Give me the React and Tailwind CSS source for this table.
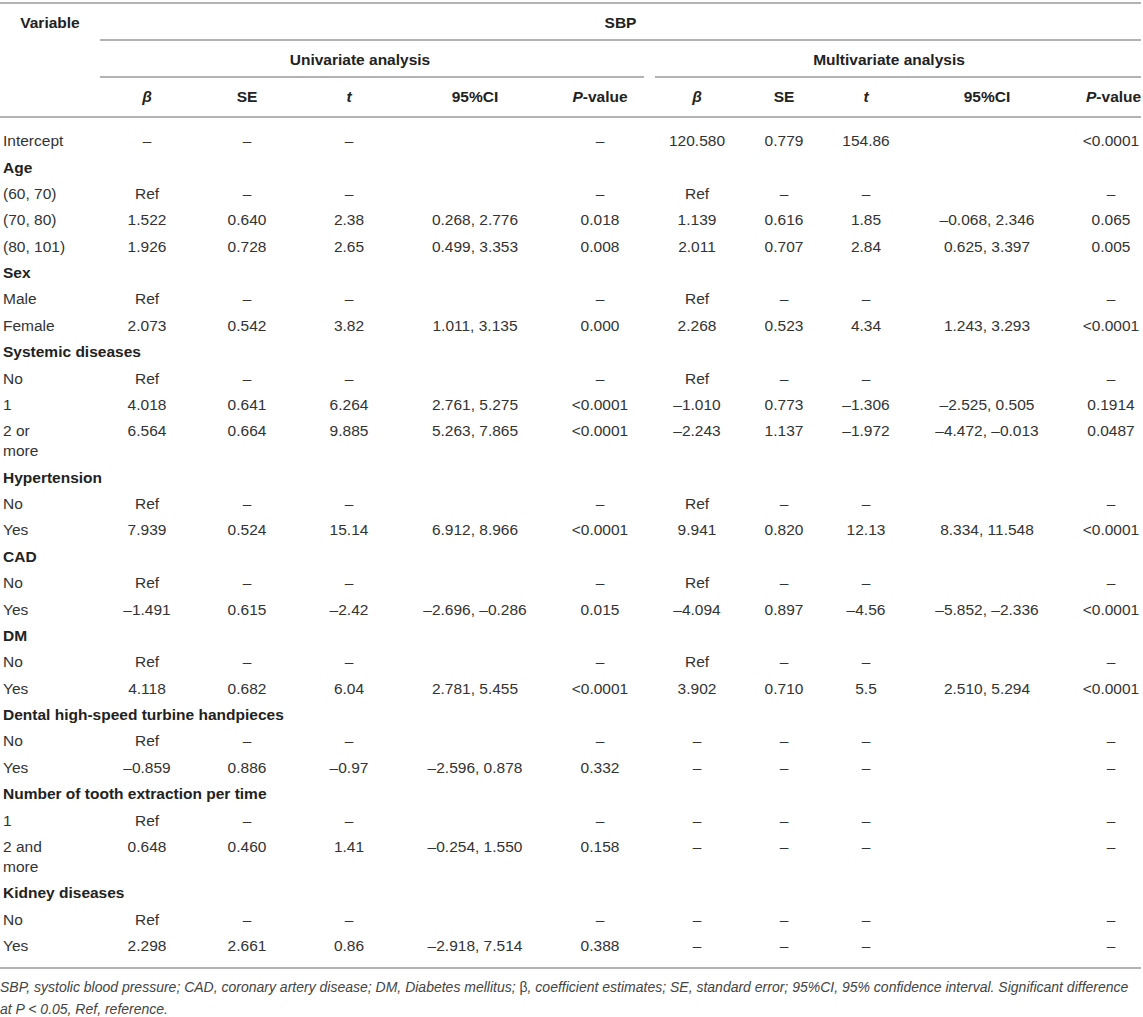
const COLS = 'grid grid-cols-[100px_94px_106px_98px_154px_96px_98px_76px_88px_154px_77px]';

const REF_BOTH = ['Ref', '–', '–', '', '–', 'Ref', '–', '–', '', '–'];
const REF_UNI = ['Ref', '–', '–', '', '–', '–', '–', '–', '', '–'];

const rows = [
  { label: 'Intercept', cells: ['–', '–', '–', '', '–', '120.580', '0.779', '154.86', '', '<0.0001'] },
  { group: 'Age' },
  { label: '(60, 70)', cells: REF_BOTH },
  { label: '(70, 80)', cells: ['1.522', '0.640', '2.38', '0.268, 2.776', '0.018', '1.139', '0.616', '1.85', '–0.068, 2.346', '0.065'] },
  { label: '(80, 101)', cells: ['1.926', '0.728', '2.65', '0.499, 3.353', '0.008', '2.011', '0.707', '2.84', '0.625, 3.397', '0.005'] },
  { group: 'Sex' },
  { label: 'Male', cells: REF_BOTH },
  { label: 'Female', cells: ['2.073', '0.542', '3.82', '1.011, 3.135', '0.000', '2.268', '0.523', '4.34', '1.243, 3.293', '<0.0001'] },
  { group: 'Systemic diseases' },
  { label: 'No', cells: REF_BOTH },
  { label: '1', cells: ['4.018', '0.641', '6.264', '2.761, 5.275', '<0.0001', '–1.010', '0.773', '–1.306', '–2.525, 0.505', '0.1914'] },
  { label: ['2 or', 'more'], cells: ['6.564', '0.664', '9.885', '5.263, 7.865', '<0.0001', '–2.243', '1.137', '–1.972', '–4.472, –0.013', '0.0487'] },
  { group: 'Hypertension' },
  { label: 'No', cells: REF_BOTH },
  { label: 'Yes', cells: ['7.939', '0.524', '15.14', '6.912, 8.966', '<0.0001', '9.941', '0.820', '12.13', '8.334, 11.548', '<0.0001'] },
  { group: 'CAD' },
  { label: 'No', cells: REF_BOTH },
  { label: 'Yes', cells: ['–1.491', '0.615', '–2.42', '–2.696, –0.286', '0.015', '–4.094', '0.897', '–4.56', '–5.852, –2.336', '<0.0001'] },
  { group: 'DM' },
  { label: 'No', cells: REF_BOTH },
  { label: 'Yes', cells: ['4.118', '0.682', '6.04', '2.781, 5.455', '<0.0001', '3.902', '0.710', '5.5', '2.510, 5.294', '<0.0001'] },
  { group: 'Dental high-speed turbine handpieces' },
  { label: 'No', cells: REF_UNI },
  { label: 'Yes', cells: ['–0.859', '0.886', '–0.97', '–2.596, 0.878', '0.332', '–', '–', '–', '', '–'] },
  { group: 'Number of tooth extraction per time' },
  { label: '1', cells: REF_UNI },
  { label: ['2 and', 'more'], cells: ['0.648', '0.460', '1.41', '–0.254, 1.550', '0.158', '–', '–', '–', '', '–'] },
  { group: 'Kidney diseases' },
  { label: 'No', cells: REF_UNI },
  { label: 'Yes', cells: ['2.298', '2.661', '0.86', '–2.918, 7.514', '0.388', '–', '–', '–', '', '–'] },
];

const subHeads = [
  <i>β</i>, 'SE', <i>t</i>, '95%CI', <><i>P</i>-value</>,
  <i>β</i>, 'SE', <i>t</i>, '95%CI', <><i>P</i>-value</>,
];

export default function App() {
  return (
    <div className="w-[1143px] bg-white pt-[2px] text-[15.5px] text-[#333] font-['Liberation_Sans',Arial,sans-serif]">
      <div className="w-[1141px] border-t-2 border-b-2 border-[#b3b3b3]">
        {/* header */}
        <div className="border-b-2 border-[#b3b3b3] font-bold text-[#222] leading-[22px] whitespace-nowrap">
          <div className={COLS}>
            <div className="pt-[8px] pb-[5px] text-center border-b-2 border-transparent">Variable</div>
            <div className="col-span-10 pt-[8px] pb-[5px] text-center border-b-2 border-[#b3b3b3]">SBP</div>
          </div>
          <div className={COLS}>
            <div />
            <div className="col-span-5 mr-[4px] pt-[8px] pb-[5px] pr-[24px] text-center border-b-2 border-[#b3b3b3]">Univariate analysis</div>
            <div className="col-span-5 ml-[7px] pt-[8px] pb-[5px] pr-[18px] text-center border-b-2 border-[#b3b3b3]">Multivariate analysis</div>
          </div>
          <div className={COLS}>
            <div />
            {subHeads.map((h, i) => (
              <div key={i} className={`pt-[8px] pb-[8px] text-center ${i === 9 ? 'pl-[22px]' : ''}`}>{h}</div>
            ))}
          </div>
        </div>

        {/* body */}
        <div className="pt-[10px] pb-[8px] leading-[20px]">
          {rows.map((r, ri) =>
            r.group ? (
              <div key={ri} className={COLS}>
                <div className="col-span-11 py-[3.2px] pl-[3px] font-bold text-[#222]">{r.group}</div>
              </div>
            ) : (
              <div key={ri} className={COLS}>
                <div className="py-[3.2px] pl-[3px]">
                  {Array.isArray(r.label) ? <>{r.label[0]}<br />{r.label[1]}</> : r.label}
                </div>
                {r.cells.map((c, ci) => (
                  <div key={ci} className={`py-[3.2px] text-center whitespace-nowrap ${ci === 9 ? 'pl-[17px]' : ''}`}>{c}</div>
                ))}
              </div>
            )
          )}
        </div>
      </div>

      <p className="w-[1143px] pt-[7px] leading-[22px] italic text-[14px] text-[#444]">
        SBP, systolic blood pressure; CAD, coronary artery disease; DM, Diabetes mellitus; <span className="not-italic">β</span>, coefficient estimates; SE, standard error; 95%CI, 95% confidence interval. Significant difference at P &lt; 0.05, Ref, reference.
      </p>
    </div>
  );
}
